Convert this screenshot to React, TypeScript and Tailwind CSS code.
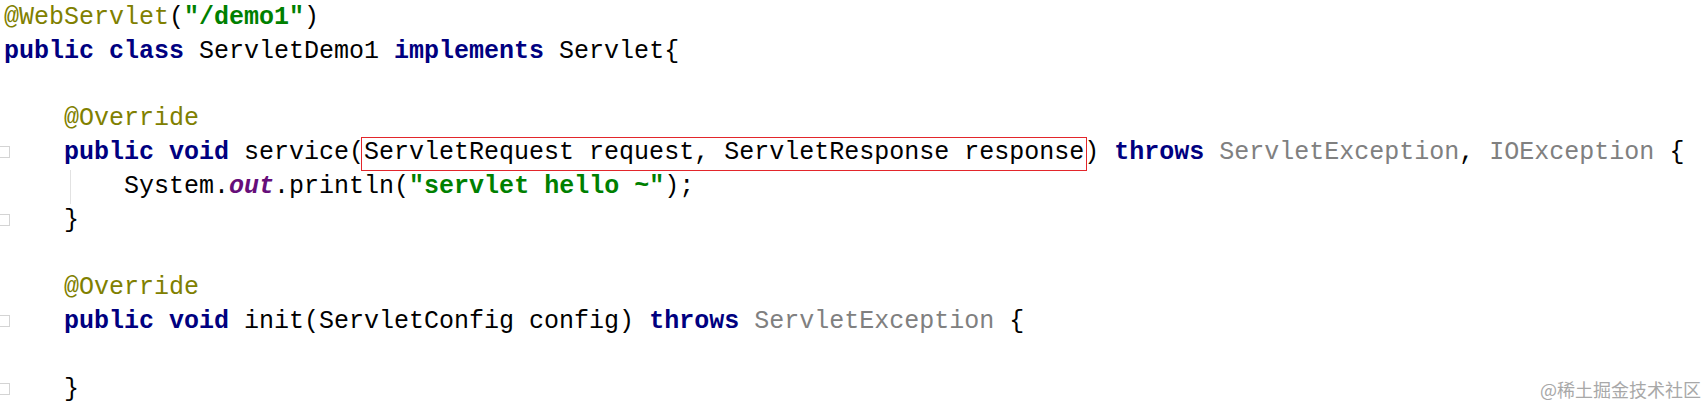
import React from "react";

const kw = "font-bold text-[#000080]";
const str = "font-bold text-[#008000]";
const ann = "text-[#808000]";
const dim = "text-[#808080]";

function Fold() {
  return <span className="absolute left-[-7px] top-[10px] h-[12px] w-[13px] border border-[#d4d4d4] bg-white" />;
}

function Line({ children, fold, guide }: { children?: React.ReactNode; fold?: boolean; guide?: boolean }) {
  return (
    <div className="relative h-[33.8px] whitespace-pre">
      {fold && <Fold />}
      {guide && <span className="absolute left-[66px] top-0 h-full w-px bg-[#e2e2e2]" />}
      {children ?? " "}
    </div>
  );
}

export default function App() {
  return (
    <div
      className="relative h-[407px] w-[1708px] overflow-hidden bg-white pl-[4px] pt-[1px] text-[25px] leading-[33.8px] text-black"
      style={{ fontFamily: '"Liberation Mono", "Courier New", monospace' }}
    >
      <Line>
        <span className={ann}>@WebServlet</span>(<span className={str}>"/demo1"</span>)
      </Line>
      <Line>
        <span className={kw}>public class</span> ServletDemo1 <span className={kw}>implements</span> Servlet{"{"}
      </Line>
      <Line />
      <Line>
        {"    "}
        <span className={ann}>@Override</span>
      </Line>
      <Line fold>
        {"    "}
        <span className={kw}>public void</span> service(
        <span className="relative">
          ServletRequest request, ServletResponse response
          <span className="pointer-events-none absolute left-[-3px] right-[-3px] top-[-1px] bottom-[-4px] border border-[#e3262b]" />
        </span>
        ) <span className={kw}>throws</span> <span className={dim}>ServletException</span>,{" "}
        <span className={dim}>IOException</span> {"{"}
      </Line>
      <Line guide>
        {"        "}System.<span className="font-bold italic text-[#660e7a]">out</span>.println(
        <span className={str}>"servlet hello ~"</span>);
      </Line>
      <Line fold>{"    }"}</Line>
      <Line />
      <Line>
        {"    "}
        <span className={ann}>@Override</span>
      </Line>
      <Line fold>
        {"    "}
        <span className={kw}>public void</span> init(ServletConfig config) <span className={kw}>throws</span>{" "}
        <span className={dim}>ServletException</span> {"{"}
      </Line>
      <Line />
      <Line fold>{"    }"}</Line>

      <div
        className="absolute right-[7px] top-[377px] text-[18px] leading-[24px] text-[#a8a8a8]"
        style={{ fontFamily: '"Noto Sans CJK SC", sans-serif' }}
      >
        @稀土掘金技术社区
      </div>
    </div>
  );
}
